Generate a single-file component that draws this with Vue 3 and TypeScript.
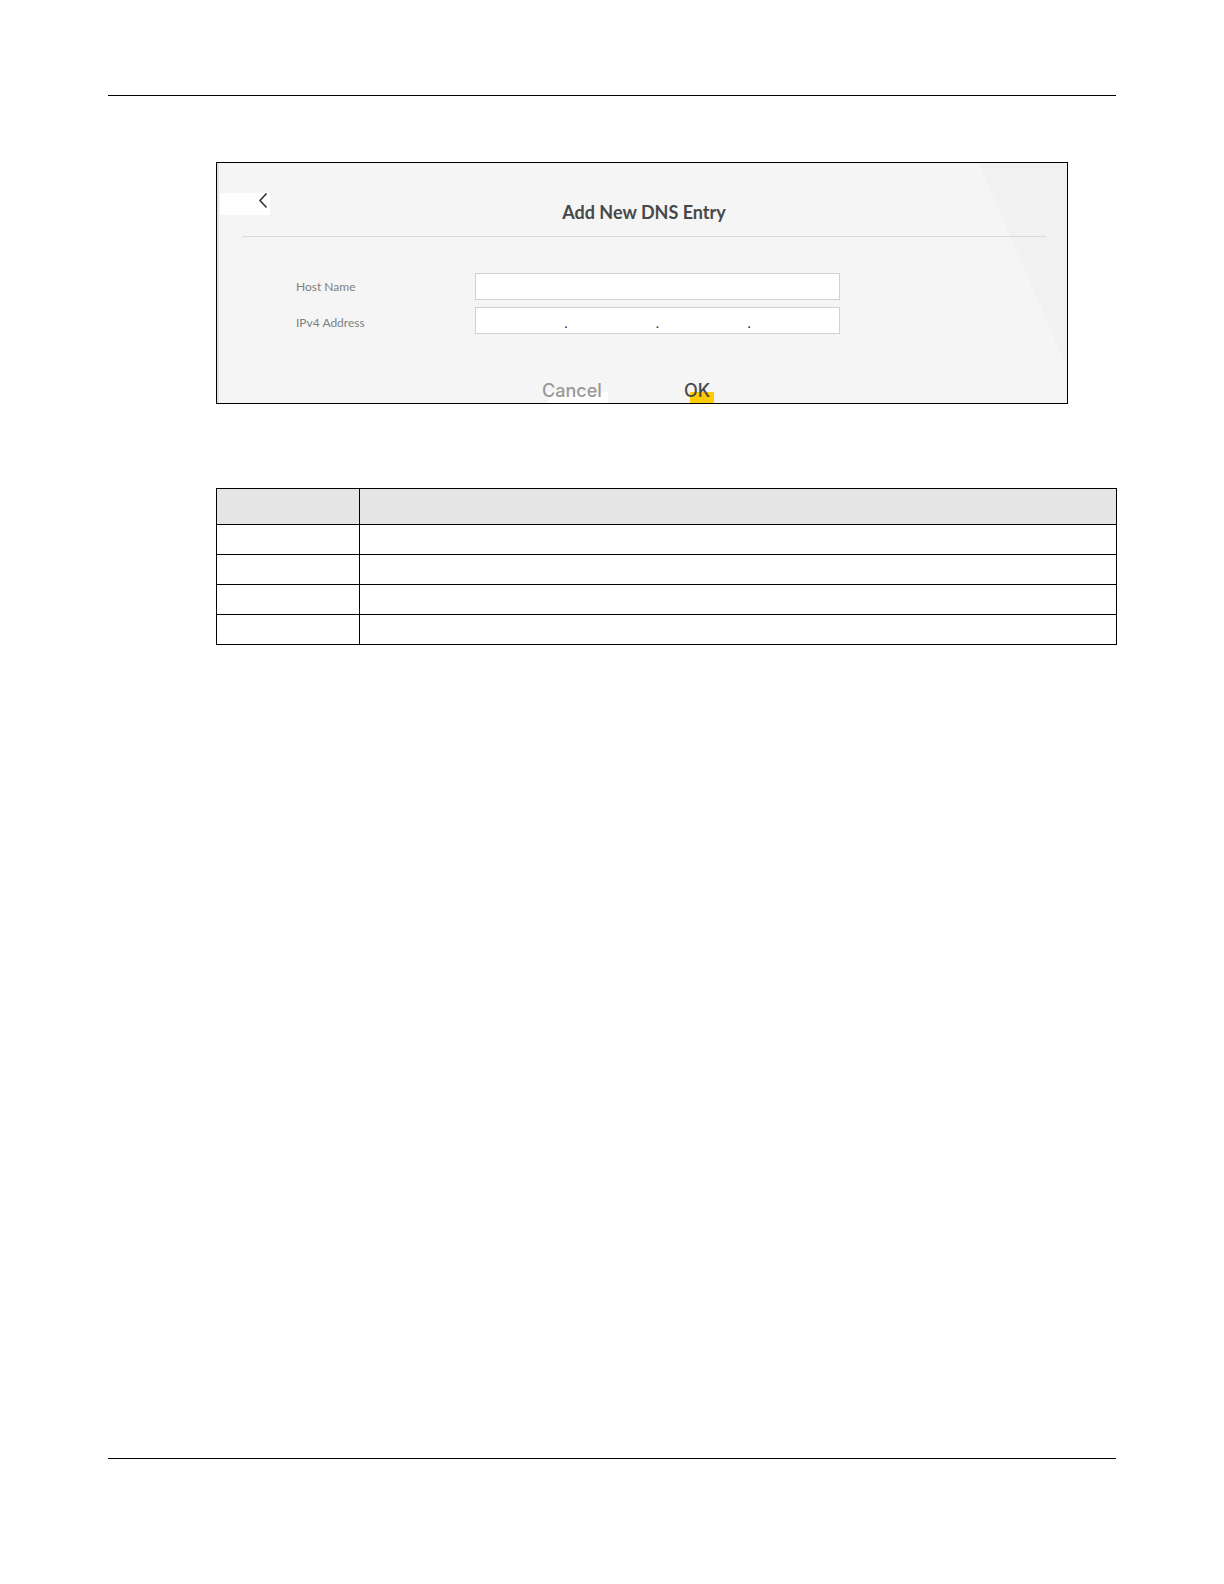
<script setup lang="ts">
import { ref } from 'vue'

const hostName = ref('')
const octets = ref<string[]>(['', '', '', ''])
const rows = [0, 1, 2, 3]
</script>

<template>
  <div class="page">
    <main class="content">
      <form class="panel" @submit.prevent>
        <header class="panel-head">
          <button type="button" class="back" aria-label="Back">
            <svg width="10" height="16" viewBox="0 0 10 16" aria-hidden="true">
              <path d="M8.5 0.5 L2 7.5 L8.5 14.5" fill="none" stroke="#333" stroke-width="1.6" />
            </svg>
          </button>
          <h1>Add New DNS Entry</h1>
        </header>

        <div class="fields">
          <div class="labels">
            <label for="host">Host Name</label>
            <label for="octet-0">IPv4 Address</label>
          </div>
          <div class="inputs">
            <input id="host" v-model="hostName" class="box" type="text" />
            <div class="box address">
              <template v-for="(_, i) in octets" :key="i">
                <span v-if="i > 0" class="dot">.</span>
                <input
                  :id="`octet-${i}`"
                  v-model="octets[i]"
                  type="text"
                  maxlength="3"
                  :aria-label="i > 0 ? `Address part ${i + 1}` : undefined"
                />
              </template>
            </div>
          </div>
        </div>

        <div class="actions">
          <button type="button" class="cancel">Cancel</button>
          <button type="submit" class="ok">OK</button>
        </div>
      </form>

      <table class="reference">
        <thead>
          <tr>
            <th scope="col"></th>
            <th scope="col"></th>
          </tr>
        </thead>
        <tbody>
          <tr v-for="row in rows" :key="row">
            <td></td>
            <td></td>
          </tr>
        </tbody>
      </table>
    </main>
  </div>
</template>

<style>
body {
  margin: 0;
  background: #fff;
}
</style>

<style scoped>
.page {
  box-sizing: border-box;
  min-height: 100vh;
  padding: 95px 108px 125px;
  display: flex;
  flex-direction: column;
  font-family: Lato, 'Liberation Sans', sans-serif;
}

.content {
  flex: 1;
  padding: 66px 0 0 108px;
  border-top: 1px solid #000;
  border-bottom: 1px solid #000;
}

.panel {
  box-sizing: border-box;
  margin-right: 48px;
  border: 1px solid #000;
  box-shadow: inset 2px 0 #e2e2e2;
  background:
    linear-gradient(to top right, transparent 50%, #f1f1f1 50%) no-repeat right top / 88px 206px,
    #f5f5f5;
}

.panel-head {
  display: grid;
}

.back,
h1 {
  grid-area: 1 / 1;
}

button,
input {
  margin: 0;
  padding: 0;
  border: 0;
  background: none;
  font-family: inherit;
}

.back {
  justify-self: start;
  display: flex;
  justify-content: flex-end;
  width: 50px;
  height: 22px;
  margin: 30px 0 0 3px;
  padding-right: 2px;
  background: #fff;
}

h1 {
  margin: 0 21px 0 25px;
  padding: 37px 0 12px;
  border-bottom: 1px solid #d9d9d9;
  color: #484848;
  font-size: 18px;
  font-weight: 700;
  line-height: 24px;
  text-align: center;
}

.fields {
  display: flex;
  padding: 36px 24px 0 79px;
}

.labels {
  display: flex;
  flex-direction: column;
  width: 179px;
  margin-top: -4px;
  color: #808080;
  font-size: 12px;
  line-height: 36px;
}

.inputs {
  flex: 1;
  display: flex;
  flex-direction: column;
  gap: 7px;
  max-width: 365px;
}

.box {
  box-sizing: border-box;
  width: 100%;
  height: 27px;
  border: 1px solid #cdd2d2;
  background: #fff;
  font-size: 14px;
}

.address {
  display: flex;
}

.address input {
  flex: 1;
  min-width: 0;
  text-align: center;
}

.dot {
  color: #333;
  line-height: 30px;
}

.actions {
  display: flex;
  gap: 76px;
  padding: 39px 0 0 325px;
}

.actions button {
  height: 23px;
  padding-bottom: 2px;
  font-family: Inter, 'Liberation Sans', sans-serif;
  font-size: 18px;
  font-weight: 500;
  line-height: 21px;
  text-align: left;
}

.cancel {
  width: 66px;
  background: linear-gradient(#fff, #fff) no-repeat right bottom / 60px 11px;
  color: #999;
}

.ok {
  width: 30px;
  background: linear-gradient(#fc0, #fc0) no-repeat right bottom / 24px 11px;
  color: #484848;
}

.reference {
  width: calc(100% + 1px);
  margin-top: 84px;
  border-collapse: collapse;
  table-layout: fixed;
}

.reference th,
.reference td {
  box-sizing: border-box;
  height: 30px;
  padding: 0;
  border: 1px solid #000;
}

.reference th {
  height: 36px;
  background: #e5e5e5;
}

.reference th:first-child {
  width: 143px;
}
</style>
